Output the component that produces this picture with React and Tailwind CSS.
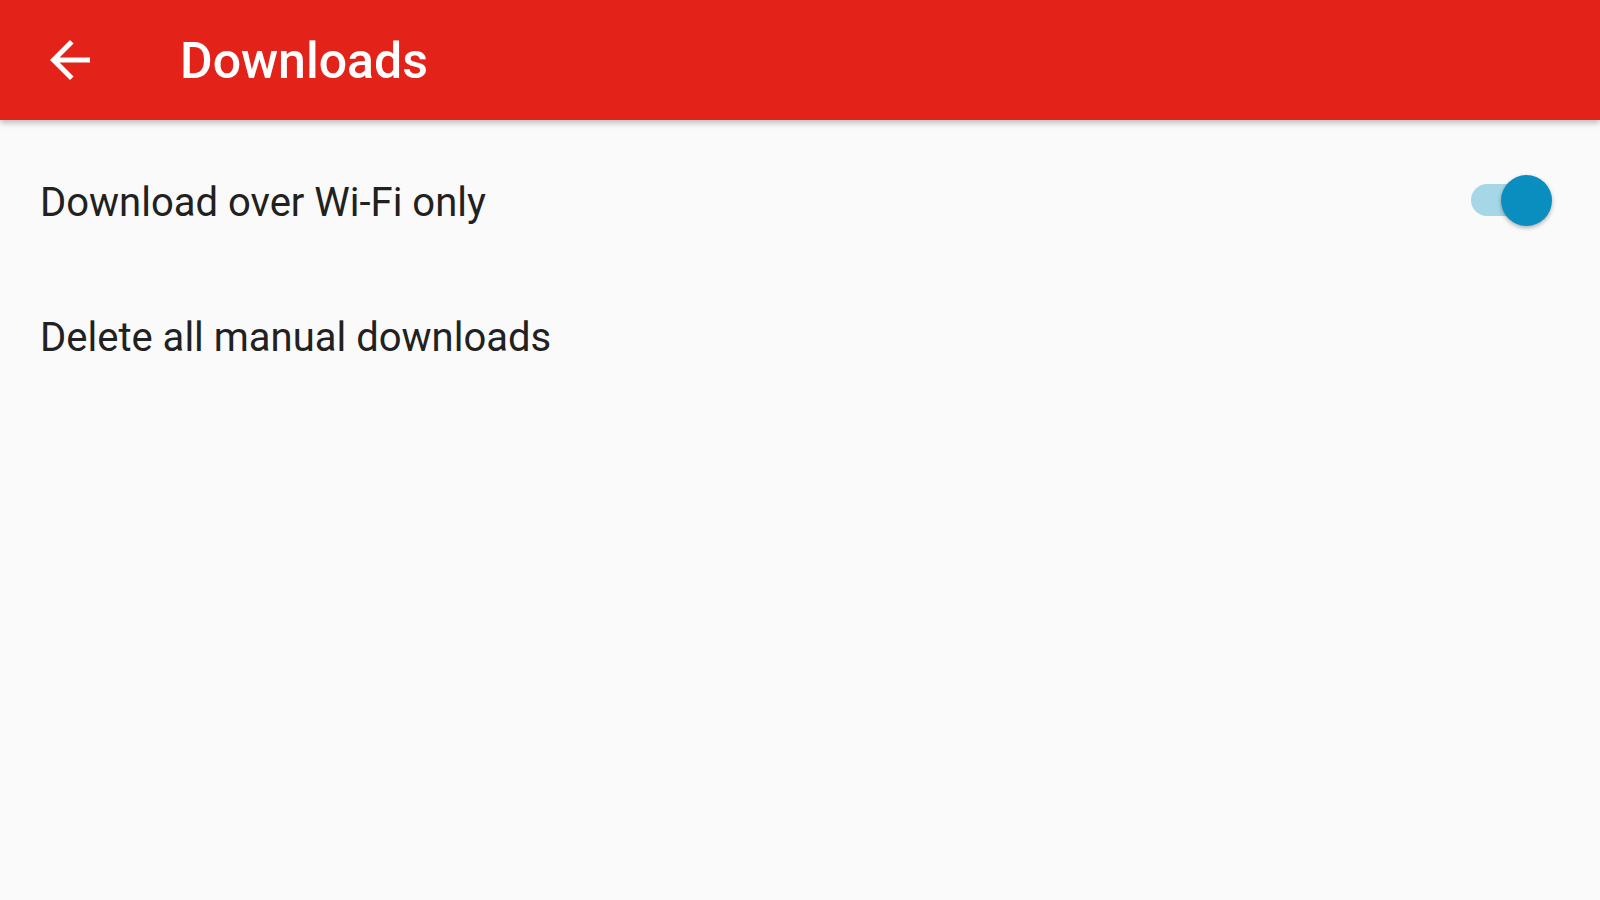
import { useState } from 'react';

function BackArrow() {
  return (
    <svg width="60" height="60" viewBox="0 0 24 24" fill="#ffffff">
      <path d="M20 11H7.83l5.59-5.59L12 4l-8 8 8 8 1.41-1.41L7.83 13H20v-2z" />
    </svg>
  );
}

function Switch({ on, onChange }) {
  return (
    <button
      type="button"
      onClick={() => onChange(!on)}
      className="relative mb-[6px] flex h-[52px] w-[82px] items-center"
    >
      <span className={`ml-[1px] h-[32px] w-[74px] rounded-full ${on ? 'bg-[#a6d7e7]' : 'bg-[#bdbdbd]'}`} />
      <span
        className={`absolute top-[1px] h-[51px] w-[51px] rounded-full shadow-[0_2px_4px_rgba(0,0,0,0.3)] ${on ? 'right-0 bg-[#0a8ec0]' : 'left-0 bg-[#f1f1f1]'}`}
      />
    </button>
  );
}

export default function App() {
  const [wifiOnly, setWifiOnly] = useState(true);

  const rowClass = "flex h-[135px] items-center justify-between pl-[40px] pr-[48px]";
  const labelClass = "text-[40px] leading-[46px] text-[#212121]";

  return (
    <div className="min-h-screen bg-[#fafafa]" style={{ fontFamily: 'Roboto, "Noto Sans", sans-serif' }}>
      {/* APP BAR */}
      <header className="relative z-10 flex h-[120px] items-center bg-[#e32219] shadow-[0_3px_6px_rgba(0,0,0,0.25)]">
        <div className="ml-[40px] flex h-[60px] w-[60px] items-center">
          <BackArrow />
        </div>
        <h1 className="ml-[80px] mt-[2px] text-[50px] font-medium leading-none text-white">Downloads</h1>
      </header>

      {/* SETTINGS LIST */}
      <div className="pt-[15px]">
        <div className={rowClass}>
          <span className={labelClass}>Download over Wi-Fi only</span>
          <Switch on={wifiOnly} onChange={setWifiOnly} />
        </div>
        <div className={rowClass}>
          <span className={labelClass}>Delete all manual downloads</span>
        </div>
      </div>
    </div>
  );
}
